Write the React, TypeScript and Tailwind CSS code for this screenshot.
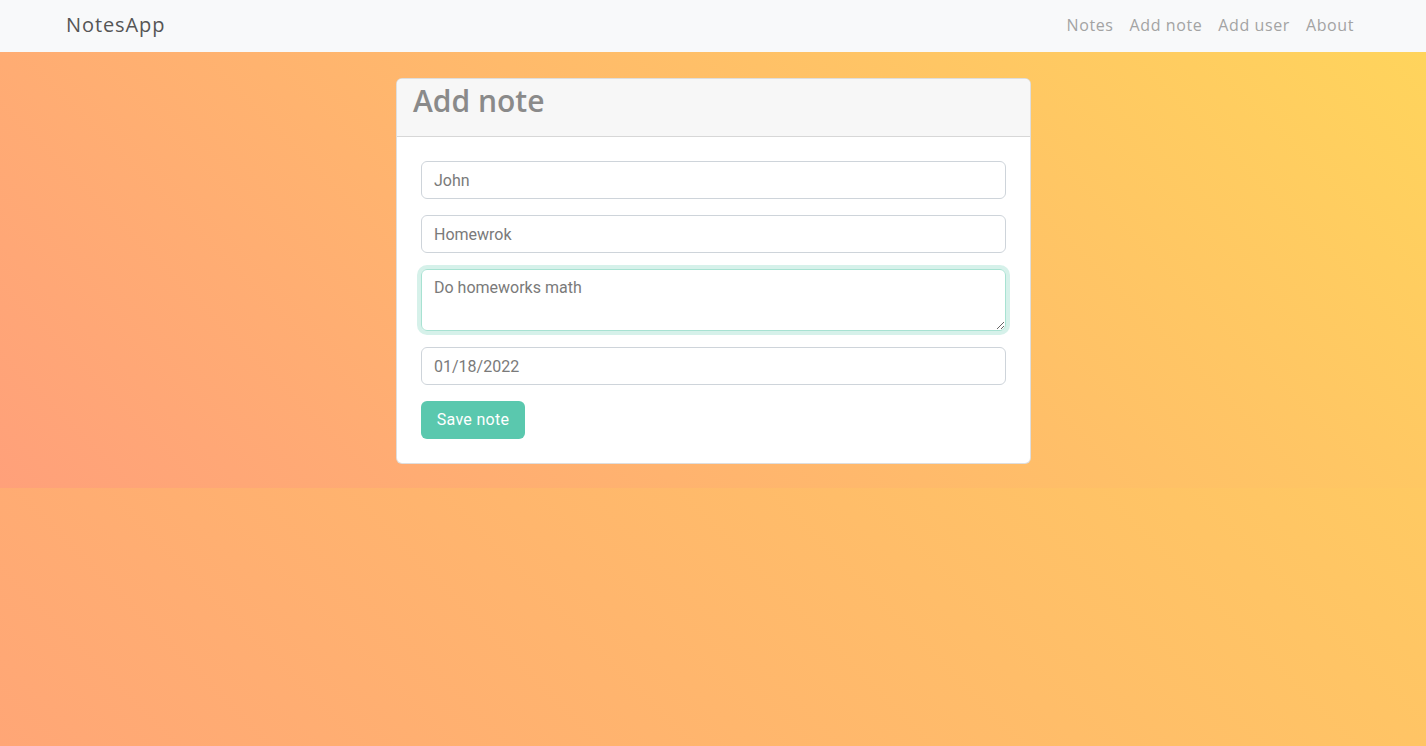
import { useState } from "react";

const navLinks = ["Notes", "Add note", "Add user", "About"];

export default function App() {
  const [user, setUser] = useState("John");
  const [title, setTitle] = useState("Homewrok");
  const [body, setBody] = useState("Do homeworks math");
  const [date, setDate] = useState("01/18/2022");

  return (
    <div className="min-h-screen bg-[linear-gradient(45deg,#ffa676,#ffd45c)] font-['Open_Sans',sans-serif]">
      <nav className="flex h-[52px] items-center justify-between bg-[#f8f9fa] pb-[3px] pl-[66px] pr-[64px]">
        <a className="text-[20px] tracking-[0.9px] text-[#555]">NotesApp</a>
        <ul className="flex">
          {navLinks.map((link) => (
            <li key={link} className="px-2 text-[16px] tracking-[0.6px] text-[#a3a3a3]">
              {link}
            </li>
          ))}
        </ul>
      </nav>

      <section className="bg-[linear-gradient(45deg,#ffa07a,#ffd45c)] pb-[24px] pt-[26px]">
        <div className="flex justify-center pl-[1px]">
          <div className="w-[635px] overflow-hidden rounded-[6px] border border-black/[0.13] bg-white">
            <div className="h-[58px] border-b border-black/[0.13] bg-[#f7f7f7] px-4 pt-[4px]">
              <h2 className="text-[30px] font-semibold leading-[36px] text-[#8a8a8a]">
                Add note
              </h2>
            </div>
            <form className="flex flex-col gap-4 p-6 font-['Roboto',sans-serif]">
              <input
                value={user}
                onChange={(e) => setUser(e.target.value)}
                className="h-[38px] w-full rounded-[6px] border border-[#ced4da] px-3 text-[16px] text-[#7a7a7a] outline-none"
              />
              <input
                value={title}
                onChange={(e) => setTitle(e.target.value)}
                className="h-[38px] w-full rounded-[6px] border border-[#ced4da] px-3 text-[16px] text-[#7a7a7a] outline-none"
              />
              <textarea
                value={body}
                onChange={(e) => setBody(e.target.value)}
                rows={2}
                className="h-[62px] w-full resize-y rounded-[6px] border border-[#a8e2d2] px-3 py-[6px] text-[16px] leading-6 text-[#7a7a7a] shadow-[0_0_0_4px_rgba(90,200,170,0.25)] outline-none"
              />
              <input
                value={date}
                onChange={(e) => setDate(e.target.value)}
                className="h-[38px] w-full rounded-[6px] border border-[#ced4da] px-3 text-[16px] text-[#7a7a7a] outline-none"
              />
              <div>
                <button
                  type="button"
                  className="h-[38px] w-[104px] rounded-[6px] bg-[#5ac8ae] text-[16px] tracking-[0.3px] text-white"
                >
                  Save note
                </button>
              </div>
            </form>
          </div>
        </div>
      </section>
    </div>
  );
}
